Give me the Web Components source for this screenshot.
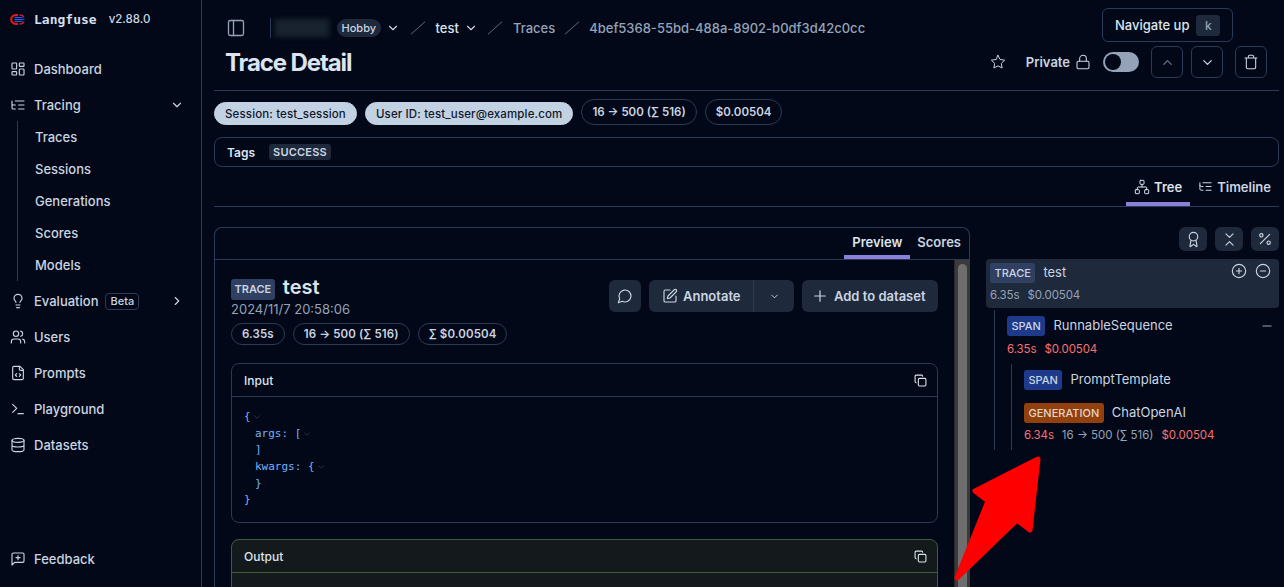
<!DOCTYPE html>
<html lang=en>
<title>Trace Detail</title>
<meta charset=utf-8>
<style>
html, body { margin: 0; height: 587px; overflow: hidden; background: #020817; }
body { font: 500 13px Inter, "Liberation Sans", sans-serif; color: #cbd5e1; }
</style>
<body>
<lf-app>
  <lf-sidebar slot=side></lf-sidebar>
  <lf-topbar></lf-topbar>
  <lf-trace-meta></lf-trace-meta>
  <lf-view-tabs></lf-view-tabs>
  <lf-split>
    <lf-preview slot=left></lf-preview>
    <lf-tree slot=right></lf-tree>
  </lf-split>
</lf-app>
<script>
const ICONS = {
  dashboard: '<rect x="3" y="3" width="7" height="9" rx="1"/><rect x="14" y="3" width="7" height="5" rx="1"/><rect x="14" y="12" width="7" height="9" rx="1"/><rect x="3" y="16" width="7" height="5" rx="1"/>',
  listtree: '<path d="M21 12h-8M21 6H8M21 18h-8M3 6v4c0 1.1.9 2 2 2h3M3 10v6c0 1.1.9 2 2 2h3"/>',
  bulb: '<path d="M15 14c.2-1 .7-1.7 1.5-2.5 1-.9 1.5-2.2 1.5-3.5A6 6 0 0 0 6 8c0 1 .2 2.2 1.5 3.5.7.7 1.3 1.5 1.5 2.5M9 18h6M10 22h4"/>',
  users: '<path d="M16 21v-2a4 4 0 0 0-4-4H6a4 4 0 0 0-4 4v2"/><circle cx="9" cy="7" r="4"/><path d="M22 21v-2a4 4 0 0 0-3-3.87M16 3.13a4 4 0 0 1 0 7.75"/>',
  filecode: '<path d="M15 2H6a2 2 0 0 0-2 2v16a2 2 0 0 0 2 2h12a2 2 0 0 0 2-2V7Z"/><path d="M14 2v4a2 2 0 0 0 2 2h4M10 13l-2 2 2 2M14 17l2-2-2-2"/>',
  terminal: '<path d="M4 17l6-6-6-6M12 19h8"/>',
  database: '<ellipse cx="12" cy="5" rx="9" ry="3"/><path d="M3 5V19A9 3 0 0 0 21 19V5M3 12A9 3 0 0 0 21 12"/>',
  feedback: '<path d="M21 15a2 2 0 0 1-2 2H7l-4 4V5a2 2 0 0 1 2-2h14a2 2 0 0 1 2 2z"/><path d="M12 7v6M9 10h6"/>',
  panel: '<rect x="3" y="3" width="18" height="18" rx="2"/><path d="M9 3v18"/>',
  down: '<path d="m6 9 6 6 6-6"/>',
  up: '<path d="m18 15-6-6-6 6"/>',
  right: '<path d="m9 18 6-6-6-6"/>',
  slash: '<path d="M21 4 3 20"/>',
  star: '<path d="M12 2l3.09 6.26L22 9.27l-5 4.87 1.18 6.88L12 17.77l-6.18 3.25L7 14.14 2 9.27l6.91-1.01z"/>',
  lock: '<rect x="3" y="11" width="18" height="11" rx="2"/><path d="M7 11V7a5 5 0 0 1 10 0v4"/>',
  trash: '<path d="M3 6h18M19 6v14c0 1-1 2-2 2H7c-1 0-2-1-2-2V6M8 6V4c0-1 1-2 2-2h4c1 0 2 1 2 2v2"/>',
  network: '<rect x="16" y="16" width="6" height="6" rx="1"/><rect x="2" y="16" width="6" height="6" rx="1"/><rect x="9" y="2" width="6" height="6" rx="1"/><path d="M5 16v-3a1 1 0 0 1 1-1h12a1 1 0 0 1 1 1v3M12 12V8"/>',
  award: '<circle cx="12" cy="8" r="6"/><path d="m15.477 12.89 1.515 8.526a.5.5 0 0 1-.81.47l-3.58-2.687a1 1 0 0 0-1.197 0l-3.586 2.686a.5.5 0 0 1-.81-.469l1.514-8.526"/>',
  fold: '<path d="m7 20 5-5 5 5M7 4l5 5 5-5"/>',
  percent: '<path d="M19 5 5 19"/><circle cx="6.5" cy="6.5" r="2.5"/><circle cx="17.5" cy="17.5" r="2.5"/>',
  comment: '<path d="M7.9 20A9 9 0 1 0 4 16.1L2 22Z"/>',
  pen: '<path d="M12 3H5a2 2 0 0 0-2 2v14a2 2 0 0 0 2 2h14a2 2 0 0 0 2-2v-7"/><path d="M18.375 2.625a2.121 2.121 0 1 1 3 3L12 15l-4 1 1-4Z"/>',
  plus: '<path d="M5 12h14M12 5v14"/>',
  minus: '<path d="M5 12h14"/>',
  copy: '<rect x="8" y="8" width="14" height="14" rx="2"/><path d="M4 16c-1.1 0-2-.9-2-2V4c0-1.1.9-2 2-2h10c1.1 0 2 .9 2 2"/>',
  pluscircle: '<circle cx="12" cy="12" r="10"/><path d="M8 12h8M12 8v8"/>',
  minuscircle: '<circle cx="12" cy="12" r="10"/><path d="M8 12h8"/>'
};

// small helper, every element is just a shadow root filled from a string
const define = (tag, css, html) => customElements.define(tag, class extends HTMLElement {
  constructor() {
    super();
    this.attachShadow({mode: 'open'}).innerHTML = `<style>${css}</style>` + (typeof html == 'function' ? html(this) : html);
  }
});

customElements.define('lf-icon', class extends HTMLElement {
  connectedCallback() {
    if (this.shadowRoot) return;
    const size = this.getAttribute('size') || 16;
    const sw = this.getAttribute('stroke') || 2;
    this.attachShadow({mode: 'open'}).innerHTML = `<style>:host{display:inline-flex;flex:none}svg{display:block}</style>
      <svg width="${size}" height="${size}" viewBox="0 0 24 24" fill="none" stroke="currentColor" stroke-width="${sw}" stroke-linecap="round" stroke-linejoin="round">${ICONS[this.getAttribute('name')]}</svg>`;
  }
});

define('lf-app', `
  :host { display: flex; height: 587px; position: relative; overflow: hidden; }
  main { flex: 1; min-width: 0; padding: 0 5px 0 12px; }
  svg { position: absolute; left: 950px; top: 450px; }
`, `
  <slot name=side></slot>
  <main><slot></slot></main>
  <svg width="100" height="137" viewBox="950 450 100 137"><path d="M1038 459 975 491 988 501 957 578 1017 520 1030 530Z" fill="#ff0000" stroke="#ff0000" stroke-width="5" stroke-linejoin="round"/></svg>
`);

define('lf-nav-item', `
  :host { display: flex; align-items: center; height: 36px; padding-left: 10px; color: #cbd5e1; font-size: 13px; }
  :host([sub]) { height: 32px; padding-left: 35px; }
  .ic { width: 24px; display: flex; }
  .trail { margin-left: auto; margin-right: 17px; display: flex; }
  ::slotted(lf-beta) { margin-left: 7px; }
`, el => `
  ${el.hasAttribute('icon') ? `<span class=ic><lf-icon name="${el.getAttribute('icon')}" size=16 stroke=1.7></lf-icon></span>` : ''}
  <slot></slot>
  ${el.hasAttribute('chev') ? `<span class=trail><lf-icon name="${el.getAttribute('chev')}" size=14></lf-icon></span>` : ''}
`);

define('lf-beta', `
  :host { display: inline-block; border: 1px solid #2a3a58; border-radius: 4px; font-size: 11px; line-height: 15px; padding: 0 4px; color: #cbd5e1; }
`, `<slot></slot>`);

define('lf-sidebar', `
  :host { display: flex; flex-direction: column; width: 201px; height: 587px; border-right: 1px solid #2a3a58; flex: none; }
  .brand { display: flex; align-items: center; height: 38px; padding-left: 10px; margin-bottom: 13px; }
  .brand svg { margin-right: 8px; }
  .name { font: 700 13px "DejaVu Sans Mono", monospace; color: #d5deea; }
  .ver { font-size: 11.5px; font-weight: 500; color: #cbd5e1; margin-left: 12px; }
  .subs { margin-left: 17px; margin-top: -2px; margin-bottom: 2px; border-left: 1px solid #2a3a58; }
  .subs lf-nav-item { padding-left: 17px; }
  .push { flex: 1; }
  .foot { margin-bottom: 10px; }
`, `
  <div class=brand>
    <svg width="16" height="11" viewBox="0 0 16 11" fill="none">
      <path d="M8 1.2H5.5A4.3 4.3 0 0 0 5.5 9.8H8" stroke="#e01818" stroke-width="2.2"/>
      <path d="M4.5 3.6H12.5M4.5 5.5H14.5M4.5 7.4H12.5" stroke="#2a55d6" stroke-width="1.2"/>
      <path d="M9.5 1.2A4.3 4.3 0 0 1 14 3.4M14 7.6A4.3 4.3 0 0 1 9.5 9.8" stroke="#c9203f" stroke-width="1.5"/>
    </svg>
    <span class=name>Langfuse</span><span class=ver>v2.88.0</span>
  </div>
  <lf-nav-item icon=dashboard>Dashboard</lf-nav-item>
  <lf-nav-item icon=listtree chev=down>Tracing</lf-nav-item>
  <div class=subs>
    <lf-nav-item sub>Traces</lf-nav-item>
    <lf-nav-item sub>Sessions</lf-nav-item>
    <lf-nav-item sub>Generations</lf-nav-item>
    <lf-nav-item sub>Scores</lf-nav-item>
    <lf-nav-item sub>Models</lf-nav-item>
  </div>
  <lf-nav-item icon=bulb chev=right>Evaluation<lf-beta>Beta</lf-beta></lf-nav-item>
  <lf-nav-item icon=users>Users</lf-nav-item>
  <lf-nav-item icon=filecode>Prompts</lf-nav-item>
  <lf-nav-item icon=terminal>Playground</lf-nav-item>
  <lf-nav-item icon=database>Datasets</lf-nav-item>
  <div class=push></div>
  <lf-nav-item class=foot icon=feedback>Feedback</lf-nav-item>
`);

define('lf-square-btn', `
  :host { display: inline-flex; align-items: center; justify-content: center; width: 30px; height: 30px; border: 1px solid #2a3a58; border-radius: 6px; color: #cbd5e1; flex: none; }
  :host([dim]) { color: #64748b; }
`, `<slot></slot>`);

define('lf-topbar', `
  :host { display: block; height: 90px; border-bottom: 1px solid #2a3a58; position: relative; }
  .crumbs { display: flex; align-items: center; height: 56px; padding-left: 12px; font-size: 13px; color: #94a3b8; }
  .sep { width: 1px; height: 20px; background: #2a3a58; margin: 0 4px 0 24px; }
  .blur { width: 54px; height: 18px; background: #18232f; filter: blur(2.5px); margin-right: 8px; }
  .plan { background: #1e293b; color: #cbd5e1; border-radius: 9px; height: 18px; line-height: 18px; padding: 0 4.5px; font-size: 11px; }
  .cur { color: #dbe4ef; }
  .chev { color: #cbd5e1; display: flex; margin-left: 5px; }
  .slash { display: flex; color: #64748b; margin: 0 9px 0 8px; }
  .row2 { display: flex; align-items: center; justify-content: space-between; margin-top: -10px; padding: 0 12px; height: 32px; }
  h1 { margin: 0 0 0 -1px; font-size: 24px; font-weight: 700; letter-spacing: -1.1px; color: #dbe4ef; }
  .acts { display: flex; align-items: center; color: #cbd5e1; }
  .priv { font-weight: 600; font-size: 13px; margin: 0 5px 0 20px; }
  .toggle { width: 36px; height: 20px; border-radius: 10px; background: #94a3b8; margin: 0 12px 0 12px; box-sizing: border-box; padding: 2px; }
  .toggle i { display: block; width: 16px; height: 16px; border-radius: 50%; background: #020817; }
  .gap { margin-left: 8px; }
  .gap2 { margin-left: 12px; }
  .tip { position: absolute; left: 888px; top: 8px; width: 131px; height: 34px; box-sizing: border-box; border: 1px solid #2a3a58; border-radius: 6px; background: #020817; display: flex; align-items: center; padding-left: 12px; color: #dbe4ef; font-size: 13px; }
  kbd { font: 500 12px Inter, sans-serif; margin-left: 7px; background: #1e293b; color: #94a3b8; border-radius: 3px; width: 24px; height: 21px; line-height: 21px; text-align: center; }
`, `
  <div class=crumbs>
    <lf-icon name=panel size=20 stroke=1.6></lf-icon>
    <span class=sep></span>
    <span class=blur></span>
    <span class=plan>Hobby</span>
    <span class=chev><lf-icon name=down size=14></lf-icon></span>
    <span class=slash style="margin-left:9px"><lf-icon name=slash size=18 stroke=1.2></lf-icon></span>
    <span class=cur>test</span>
    <span class=chev><lf-icon name=down size=14></lf-icon></span>
    <span class=slash><lf-icon name=slash size=18 stroke=1.2></lf-icon></span>
    <span>Traces</span>
    <span class=slash style="margin-right:8px"><lf-icon name=slash size=18 stroke=1.2></lf-icon></span>
    <span>4bef5368-55bd-488a-8902-b0df3d42c0cc</span>
  </div>
  <div class=row2>
    <h1>Trace Detail</h1>
    <div class=acts>
      <lf-icon name=star size=16 stroke=1.5></lf-icon>
      <span class=priv>Private</span>
      <lf-icon name=lock size=16 stroke=1.6></lf-icon>
      <span class=toggle><i></i></span>
      <lf-square-btn dim><lf-icon name=up size=15></lf-icon></lf-square-btn>
      <lf-square-btn class=gap><lf-icon name=down size=15></lf-icon></lf-square-btn>
      <lf-square-btn class=gap2><lf-icon name=trash size=16 stroke=1.6></lf-icon></lf-square-btn>
    </div>
  </div>
  <div class=tip>Navigate up<kbd>k</kbd></div>
`);

define('lf-pill', `
  :host { display: inline-flex; align-items: center; height: 24px; padding: 0 10px; border: 1px solid #2a3a58; border-radius: 13px; font-size: 11.5px; font-weight: 600; color: #cbd5e1; white-space: nowrap; }
  :host([filled]) { height: 21px; align-self: flex-end; background: #c3d2e3; border-color: #c3d2e3; color: #0f172a; font-weight: 500; letter-spacing: .14px; }
`, `<slot></slot>`);

define('lf-trace-meta', `
  :host { display: block; }
  .pills { display: flex; gap: 8px; padding-top: 8px; height: 26px; align-items: flex-start; }
  .tags { margin-top: 12px; height: 28px; border: 1px solid #2a3a58; border-radius: 8px; display: flex; align-items: center; padding-left: 12px; font-size: 12px; font-weight: 600; color: #dbe4ef; }
  b { margin-left: 14px; background: #1e293b; border-radius: 3px; height: 16px; line-height: 16px; padding: 0 4px; font-size: 11px; letter-spacing: .2px; font-weight: 600; color: #cbd5e1; }
`, `
  <div class=pills>
    <lf-pill filled>Session: test_session</lf-pill>
    <lf-pill filled>User ID: test_user@example.com</lf-pill>
    <lf-pill>16 → 500 (∑ 516)</lf-pill>
    <lf-pill>$0.00504</lf-pill>
  </div>
  <div class=tags>Tags<b>SUCCESS</b></div>
`);

define('lf-tab', `
  :host { display: flex; align-items: center; justify-content: center; gap: 4px; font-weight: 600; font-size: 13px; color: #cbd5e1; box-sizing: border-box; border-bottom: 4px solid transparent; }
  :host([active]) { border-bottom-color: #8b80d9; color: #dbe4ef; }
`, `<slot></slot>`);

define('lf-view-tabs', `
  :host { display: flex; justify-content: flex-end; height: 39px; border-bottom: 1px solid #2a3a58; }
  .a { width: 64px; margin-right: 8px; padding-top: 4px; }
  .b { margin-right: 8px; padding-top: 4px; }
`, `
  <lf-tab class=a active><lf-icon name=network size=16 stroke=1.5></lf-icon>Tree</lf-tab>
  <lf-tab class=b><lf-icon name=listtree size=15 stroke=1.6></lf-icon>Timeline</lf-tab>
`);

define('lf-split', `
  :host { display: grid; grid-template-columns: 756px 293px; column-gap: 16px; padding-top: 20px; }
`, `<slot name=left></slot><slot name=right></slot>`);

define('lf-btn', `
  :host { display: inline-flex; align-items: center; justify-content: center; gap: 6px; height: 32px; background: #1e293b; border-radius: 6px; color: #cbd5e1; font-weight: 600; font-size: 13px; padding: 0 12px; box-sizing: border-box; }
`, `<slot></slot>`);

define('lf-type', `
  :host { display: inline-block; height: 20px; line-height: 20px; border-radius: 3px; padding: 0 4.5px; font-size: 11px; font-weight: 500; color: #cbd5e1; background: #1e3a8a; white-space: nowrap; }
  :host([kind=trace]) { background: #2f4063; }
  :host([kind=gen]) { background: #92400e; color: #e2d5c8; }
`, `<slot></slot>`);

define('lf-json-card', `
  :host { display: block; border: 1px solid #2a3a58; border-radius: 8px; overflow: hidden; }
  :host([output]) { border-color: #3d5c3a; background: #141a1c; }
  header { display: flex; align-items: center; justify-content: space-between; height: 32px; padding: 0 10px 0 12px; border-bottom: 1px solid #2a3a58; font-size: 12px; color: #dbe4ef; }
  :host([output]) header { border-bottom-color: #3d5c3a; }
  section { padding: 12px 12px 13px; min-height: 10px; }
`, `
  <header><slot name=title></slot><lf-icon name=copy size=13 stroke=2></lf-icon></header>
  <section><slot></slot></section>
`);

define('lf-json', `
  :host { display: block; font: 500 11px/16.7px "DejaVu Sans Mono", monospace; color: #74b1f7; }
  div { height: 16.7px; white-space: pre; }
  .in { padding-left: 11px; }
  i { color: #2a3a58; display: inline-flex; vertical-align: -2px; margin-left: 1px; }
`, () => {
  const c = '<i><lf-icon name=down size=10 stroke=2></lf-icon></i>';
  return `<div>{${c}</div><div class=in>args: [${c}</div><div class=in>]</div><div class=in>kwargs: {${c}</div><div class=in>}</div><div>}</div>`;
});

define('lf-preview', `
  :host { display: block; height: 400px; border: 1px solid #2a3a58; border-bottom: 0; border-radius: 8px 8px 0 0; box-sizing: border-box; }
  .tabs { display: flex; justify-content: flex-end; height: 31px; border-bottom: 1px solid #2a3a58; padding-right: 8px; }
  .tabs .p { width: 66px; margin-right: 7px; }
  .body { display: flex; height: 340px; }
  .scroll { flex: 1; min-width: 0; padding: 19px 16px 0; }
  .bar { width: 15px; flex: none; background: #3a3a3a; border-left: 1px solid #2a2a2a; box-sizing: border-box; padding: 4px 2px 0 3px; }
  .bar i { display: block; height: 100%; background: #6e6e6e; border-radius: 5px 5px 0 0; }
  .head { display: flex; justify-content: space-between; }
  .title { display: flex; align-items: center; gap: 8px; height: 21px; font-size: 20px; font-weight: 600; color: #dbe4ef; }
  .title span { position: relative; top: -3px; }
  .title lf-type { font-weight: 600; height: 21px; padding: 0 3.5px; }
  .date { font-size: 13px; font-weight: 400; color: #94a3b8; margin-top: 1px; line-height: 17px; }
  .pills { display: flex; gap: 8px; margin-top: 5px; }
  .pills lf-pill { height: 20px; letter-spacing: .1px; }
  .acts { display: flex; gap: 8px; align-items: center; align-self: flex-start; margin-top: 1px; }
  .split { width: 1px; height: 32px; background: #2a3a58; }
  .group { display: flex; }
  .group lf-btn:first-child { border-radius: 6px 0 0 6px; width: 104px; justify-content: flex-start; padding: 0 0 0 13px; gap: 5px; }
  .group lf-btn:last-child { border-radius: 0 6px 6px 0; width: 40px; }
  .add { gap: 5px; width: 136px; justify-content: flex-start; padding: 0 0 0 9px; }
  .cards { margin-top: 18px; display: flex; flex-direction: column; gap: 16px; }
`, `
  <div class=tabs><lf-tab class=p active>Preview</lf-tab><lf-tab>Scores</lf-tab></div>
  <div class=body>
    <div class=scroll>
      <div class=head>
        <div>
          <div class=title><lf-type kind=trace>TRACE</lf-type><span>test</span></div>
          <div class=date>2024/11/7 20:58:06</div>
          <div class=pills><lf-pill>6.35s</lf-pill><lf-pill>16 → 500 (∑ 516)</lf-pill><lf-pill>∑ $0.00504</lf-pill></div>
        </div>
        <div class=acts>
          <lf-btn style="width:32px;padding:0"><lf-icon name=comment size=16 stroke=1.7></lf-icon></lf-btn>
          <div class=group>
            <lf-btn><lf-icon name=pen size=16 stroke=1.7></lf-icon>Annotate</lf-btn><span class=split></span><lf-btn><lf-icon name=down size=11></lf-icon></lf-btn>
          </div>
          <lf-btn class=add><lf-icon name=plus size=18 stroke=1.6></lf-icon>Add to dataset</lf-btn>
        </div>
      </div>
      <div class=cards>
        <lf-json-card><span slot=title>Input</span><lf-json></lf-json></lf-json-card>
        <lf-json-card output><span slot=title>Output</span></lf-json-card>
      </div>
    </div>
    <div class=bar><i></i></div>
  </div>
`);

define('lf-tree-node', `
  :host { display: block; }
  .row { display: flex; align-items: center; gap: 8px; height: 20px; font-size: 13px; font-weight: 400; color: #cbd5e1; }
  .label { margin-top: -2px; }
  .meta { display: flex; gap: 8px; font-size: 11.5px; font-weight: 400; line-height: 14px; margin-top: var(--meta-gap, 5px); color: #94a3b8; }
  ::slotted(.r) { letter-spacing: -.1px; }
  ::slotted([slot=trail]) { margin-left: auto; }
`, el => `
  <div class=row><lf-type kind="${el.getAttribute('kind') || ''}">${el.getAttribute('type')}</lf-type><span class=label>${el.getAttribute('label')}</span><slot name=trail></slot></div>
  <div class=meta><slot></slot></div>
`);

define('lf-tree', `
  :host { display: block; }
  .tools { display: flex; justify-content: flex-end; gap: 8px; height: 24px; margin-bottom: 8px; }
  .tools lf-btn { width: 28px; height: 24px; padding: 0; }
  .root { background: #1e293b; border-radius: 4px; height: 49px; padding: 4px; box-sizing: border-box; }
  .ctl { display: flex; gap: 8px; margin-right: 4px; position: relative; top: -2px; }
  .lvl1 { margin: 2px 0 0 8px; border-left: 1px solid #2a3a58; padding: 6px 0 0 12px; }
  .lvl2 { margin: 8px 0 0 4px; border-left: 1px solid #2a3a58; padding: 6px 0 8px 12px; }
  .gap { margin-top: 8px; }
  .r { color: #f87171; }
  .rg { color: #94a3b8; }
  .dash { color: #94a3b8; margin-right: 5px; }
`, `
  <div class=tools>
    <lf-btn><lf-icon name=award size=17 stroke=1.6></lf-icon></lf-btn>
    <lf-btn><lf-icon name=fold size=17 stroke=1.6></lf-icon></lf-btn>
    <lf-btn><lf-icon name=percent size=16 stroke=1.7></lf-icon></lf-btn>
  </div>
  <div class=root>
    <lf-tree-node kind=trace type=TRACE label=test>
      <span class=ctl slot=trail><lf-icon name=pluscircle size=16 stroke=1.7></lf-icon><lf-icon name=minuscircle size=16 stroke=1.7></lf-icon></span>
      <span class="r rg">6.35s</span><span class="r rg">$0.00504</span>
    </lf-tree-node>
  </div>
  <div class=lvl1>
    <lf-tree-node type=SPAN label=RunnableSequence style="--meta-gap:6px">
      <lf-icon class=dash slot=trail name=minus size=14 stroke=2></lf-icon>
      <span class=r>6.35s</span><span class=r>$0.00504</span>
    </lf-tree-node>
    <div class=lvl2>
      <lf-tree-node type=SPAN label=PromptTemplate></lf-tree-node>
      <lf-tree-node class=gap kind=gen type=GENERATION label=ChatOpenAI>
        <span class=r>6.34s</span><span>16 → 500 (∑ 516)</span><span class=r>$0.00504</span>
      </lf-tree-node>
    </div>
  </div>
`);
</script>
</body>
</html>
